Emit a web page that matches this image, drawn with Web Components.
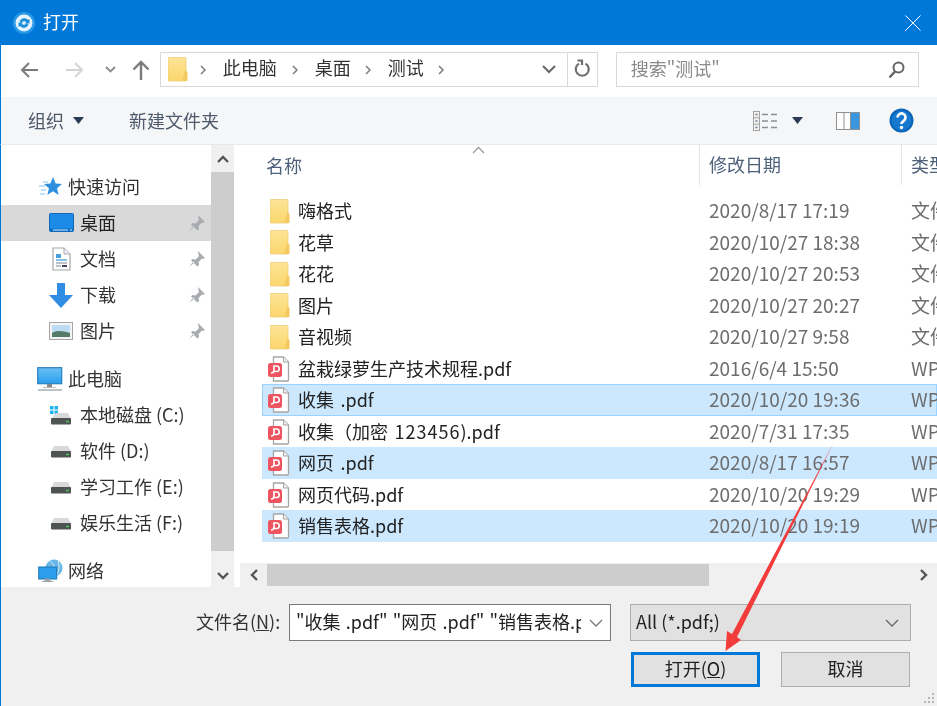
<!DOCTYPE html>
<html lang="zh-CN">
<head>
<meta charset="UTF-8">
<title>打开</title>
<style>
  html, body { margin: 0; height: 100%; overflow: hidden; }
  body { font: 18px "Noto Sans CJK SC", "Noto Sans", sans-serif; color: #222; }
</style>
</head>
<body>
<file-dialog>
  <title-bar slot="title">打开</title-bar>
  <nav-bar slot="nav"></nav-bar>
  <tool-bar slot="tools"></tool-bar>
  <side-panel slot="side">
    <tree-item icon="star" top>快速访问</tree-item>
    <tree-item icon="desktop" sub pinned selected>桌面</tree-item>
    <tree-item icon="doc" sub pinned>文档</tree-item>
    <tree-item icon="download" sub pinned>下载</tree-item>
    <tree-item icon="pics" sub pinned>图片</tree-item>
    <tree-item icon="pc" top gap>此电脑</tree-item>
    <tree-item icon="cdrive" sub>本地磁盘 (C:)</tree-item>
    <tree-item icon="drive" sub>软件 (D:)</tree-item>
    <tree-item icon="drive" sub>学习工作 (E:)</tree-item>
    <tree-item icon="drive" sub>娱乐生活 (F:)</tree-item>
    <tree-item icon="network" top gap>网络</tree-item>
  </side-panel>
  <file-list slot="files">
    <file-row icon="folder" date="2020/8/17 17:19" type="文件夹">嗨格式</file-row>
    <file-row icon="folder" date="2020/10/27 18:38" type="文件夹">花草</file-row>
    <file-row icon="folder" date="2020/10/27 20:53" type="文件夹">花花</file-row>
    <file-row icon="folder" date="2020/10/27 20:27" type="文件夹">图片</file-row>
    <file-row icon="folder" date="2020/10/27 9:58" type="文件夹">音视频</file-row>
    <file-row icon="pdf" date="2016/6/4 15:50" type="WPS PDF 文档">盆栽绿萝生产技术规程.pdf</file-row>
    <file-row icon="pdf" date="2020/10/20 19:36" type="WPS PDF 文档" selected focused>收集 .pdf</file-row>
    <file-row icon="pdf" date="2020/7/31 17:35" type="WPS PDF 文档">收集（加密 <span style="letter-spacing:1px">123456</span>).pdf</file-row>
    <file-row icon="pdf" date="2020/8/17 16:57" type="WPS PDF 文档" selected>网页 .pdf</file-row>
    <file-row icon="pdf" date="2020/10/20 19:29" type="WPS PDF 文档">网页代码.pdf</file-row>
    <file-row icon="pdf" date="2020/10/20 19:19" type="WPS PDF 文档" selected>销售表格.pdf</file-row>
  </file-list>
  <dialog-footer slot="footer"></dialog-footer>
  <red-arrow slot="arrow"></red-arrow>
</file-dialog>

<script>
const chevron = (points, color, w) => `<polyline points="${points}" fill="none" stroke="${color}" stroke-width="${w}"/>`;

const ICONS = {
  folder: [20, 25, `<defs><linearGradient id="f" x1="0" x2="0" y1="0" y2="1"><stop offset="0" stop-color="#fde597"/><stop offset="1" stop-color="#fbd66d"/></linearGradient></defs>
    <path d="M1.500 .5h15.500a1 1 0 0 1 1 1v22.500h-17a1 1 0 0 1-1-1v-21.500a1 1 0 0 1 1.500-1z" fill="url(#f)" stroke="#eccd78" stroke-width=".8"/>
    <path d="M17.500 12.500l2 3v8.500h-5.500z" fill="#f4c95f"/>`],
  pdf: [23, 26, `<path d="M6.500 1h10l5 5v18a1 1 0 0 1-1 1h-14z" fill="#fff" stroke="#a5a5a5" stroke-width="1.300"/>
    <path d="M16.500 1v5h5" fill="#eee" stroke="#a5a5a5"/>
    <rect x="1" y="7" width="14" height="14" rx="2.500" fill="#ef5561"/>
    <path d="M6 10h3.500a2.500 2.500 0 0 1 0 5.500h-2.500M7 10v4c0 2-1 3-3 3" fill="none" stroke="#fff" stroke-width="1.600"/>`],
  star: [24, 24, `<path d="M15 2l2.600 6.600 6.400.4-5 4.300 1.700 6.700-5.700-3.700-5.700 3.700 1.700-6.700-5-4.300 6.400-.4z" fill="#2e8fe0"/><path d="M1 11h6M3 15h5M2 19h5M5 7h5" stroke="#7cc4f2" stroke-width="1.200"/>`],
  desktop: [25, 20, `<rect x=".5" y=".5" width="24" height="18" rx="1" fill="#1c8be8" stroke="#1166b8"/><path d="M1 15.500h23v3H1z" fill="#0f6fc6"/><path d="M4 17h15M21 17h2" stroke="#cfe8fb"/>`],
  doc: [19, 24, `<path d="M1 1h11l6 6v16H1z" fill="#fff" stroke="#a7a7a7" stroke-width="1.200"/><path d="M12 1v6h6" fill="#eef" stroke="#a7a7a7"/><path d="M4 7h5v4H4z" fill="#4aa0dc"/><path d="M4 13h11" stroke="#4aa0dc" stroke-width="1.300"/><path d="M4 16h11M4 19h5" stroke="#7a8a96" stroke-width="1.200"/><path d="M10 18h5v2h-5z" fill="#446"/>`],
  download: [24, 25, `<path d="M8 0h8v12h8L12 25 0 12h8z" fill="#2f8de4"/>`],
  pics: [24, 18, `<rect x=".5" y=".5" width="23" height="17" fill="#f4f4f4" stroke="#a4a4a4"/><rect x="3" y="3" width="18" height="12" fill="#bcdcf3"/><path d="M3 11c5-3 11-2 18 0v4H3z" fill="#567a68"/>`],
  pc: [26, 25, `<defs><linearGradient id="m" x1="0" x2="0" y1="0" y2="1"><stop offset="0" stop-color="#6cc0f5"/><stop offset="1" stop-color="#28a0ec"/></linearGradient></defs><rect x=".7" y=".7" width="24" height="16" fill="url(#m)" stroke="#2a7fc0" stroke-width="1.200"/><path d="M10 17h5v3h-5z" fill="#888"/><path d="M1 23h24" stroke="#aab4ba" stroke-width="1.600"/><path d="M6 20.500h13" stroke="#bbb"/>`],
  drive: [22, 13, `<path d="M4 1h14l3 6H1z" fill="#d9d9d9"/><rect x="1" y="6" width="20" height="6.500" rx="1" fill="#4e5353"/><path d="M16 9.500h3" stroke="#4ecb57" stroke-width="1.500"/>`],
  cdrive: [22, 20, `<path d="M0 1h3.500v3.500H0zM4.500 1H8v3.500H4.500zM0 5.500h3.500V9H0zM4.500 5.500H8V9H4.500z" fill="#1cb5ef"/><path d="M6 8h12l3 6H2l2-4z" fill="#d9d9d9"/><rect x="1" y="13" width="20" height="6.500" rx="1" fill="#4e5353"/><path d="M16 16.500h3" stroke="#4ecb57" stroke-width="1.500"/>`],
  network: [25, 24, `<circle cx="16" cy="9" r="8.500" fill="#68b7e6"/><path d="M12 2c4 3 6 8 4 15M20 2c2 5 1 11-2 15" stroke="#d9eefa" fill="none"/><rect x=".7" y="8" width="18" height="12" fill="#2a9eea" stroke="#1d76b6"/><path d="M7 20h5v2H7zM4 22.500h11" stroke="#9aa4aa" fill="#9aa4aa"/>`],
  pin: [18, 18, `<path d="M10 1l7 7-2 1-1-.5-3.500 3.500.5 3-1.500 1.500L3 10.500 4.500 9l3 .5L11 6l-.5-1.500zM5.500 11.500L1 17l5.500-4.500z" fill="#a8acb0"/>`]
};

class WinIcon extends HTMLElement {
  connectedCallback() {
    const [w, h, body] = ICONS[this.getAttribute('name')];
    this.attachShadow({ mode: 'open' }).innerHTML = `
      <style>:host { display: inline-flex; } svg { display: block; }</style>
      <svg width="${w}" height="${h}" viewBox="0 0 ${w} ${h}">${body}</svg>`;
  }
}

class FileDialog extends HTMLElement {
  constructor() {
    super();
    this.attachShadow({ mode: 'open' }).innerHTML = `
      <style>
        :host { display: flex; flex-direction: column; position: relative; width: 937px; height: 706px; overflow: hidden; background: #fff; filter: blur(.35px); }
        .middle { display: flex; height: 442px; overflow: hidden; border-left: 1px solid #0078d7; }
      </style>
      <slot name="title"></slot>
      <slot name="nav"></slot>
      <slot name="tools"></slot>
      <div class="middle"><slot name="side"></slot><slot name="files"></slot></div>
      <slot name="footer"></slot>
      <slot name="arrow"></slot>`;
  }
}

class TitleBar extends HTMLElement {
  constructor() {
    super();
    this.attachShadow({ mode: 'open' }).innerHTML = `
      <style>
        :host { display: flex; align-items: center; height: 45px; flex: none; background: #0078d7; color: #fff; padding: 0 16px 0 13px; }
        .text { margin-left: 8px; flex: 1; padding-bottom: 4px; }
      </style>
      <svg width="22" height="22" viewBox="0 0 22 22">
        <circle cx="11" cy="11" r="11" fill="#2a9ae8"/><circle cx="11" cy="11" r="8.500" fill="#e6f5fd"/>
        <path d="M6.500 9.500a5 5 0 0 1 8.500-1.500l1.500-1v4.500h-4.500l1.300-1.300a2.800 2.800 0 0 0-4.500.3zM15.500 12.500a5 5 0 0 1-8.500 1.500l-1.500 1v-4.500h4.500l-1.300 1.300a2.800 2.800 0 0 0 4.500-.3z" fill="#1c8ed9"/>
      </svg>
      <span class="text"><slot></slot></span>
      <svg width="16" height="16" viewBox="0 0 16 16"><path d="M.5 .5l15 15M15.500 .5l-15 15" stroke="#fff" stroke-width="1"/></svg>`;
  }
}

class NavBar extends HTMLElement {
  constructor() {
    super();
    this.attachShadow({ mode: 'open' }).innerHTML = `
      <style>
        :host { display: flex; align-items: center; height: 52px; flex: none; box-sizing: border-box; padding: 0 18px 3px 1px; background: #fff; border-left: 1px solid #0078d7; }
        .btns { display: flex; align-items: center; width: 158px; box-sizing: border-box; padding-left: 18px; }
        .btns svg { display: block; flex: none; }
        .addr, .search { display: flex; align-items: center; height: 35px; box-sizing: border-box; border: 1px solid #d9d9d9; }
        .addr { width: 439px; padding-left: 7px; color: #333; }
        .crumb { display: flex; align-items: center; }
        .crumb span { margin: 0 14px 0 17px; padding-bottom: 6px; }
        .end { margin-left: auto; display: flex; align-items: center; height: 100%; }
        .refresh { display: flex; align-items: center; justify-content: center; width: 30px; height: 100%; border-left: 1px solid #d9d9d9; padding-bottom: 2px; box-sizing: border-box; }
        .search { width: 304px; margin-left: 18px; padding: 0 13px 0 14px; justify-content: space-between; color: #8a8a8a; }
        .search span { padding-bottom: 3px; }
      </style>
      <div class="btns">
        <svg width="19" height="16" viewBox="0 0 19 16"><path d="M18 8H3M9 1L2 8l7 7" fill="none" stroke="#7b7b7b" stroke-width="2"/></svg>
        <svg style="margin-left:26px" width="19" height="16" viewBox="0 0 19 16"><path d="M1 8h15M10 1l7 7-7 7" fill="none" stroke="#d4d4d4" stroke-width="2"/></svg>
        <svg style="margin-left:21px" width="11" height="7" viewBox="0 0 11 7">${chevron('1,1 5.500,5.500 10,1', '#8b8b8b', 1.800)}</svg>
        <svg style="margin-left:16px" width="18" height="20" viewBox="0 0 18 20"><path d="M9 20V3M1.500 9.500L9 2l7.500 7.500" fill="none" stroke="#7b7b7b" stroke-width="2.400"/></svg>
      </div>
      <div class="addr">
        <win-icon name="folder"></win-icon>
        <div class="crumb" style="margin-left:12px">
          <svg width="6" height="10" viewBox="0 0 6 10">${chevron('1,1 5,5 1,9', '#7a7a7a', 1.500)}</svg><span style="margin-right:15px">此电脑</span>
          <svg width="6" height="10" viewBox="0 0 6 10">${chevron('1,1 5,5 1,9', '#7a7a7a', 1.500)}</svg><span>桌面</span>
          <svg width="6" height="10" viewBox="0 0 6 10">${chevron('1,1 5,5 1,9', '#7a7a7a', 1.500)}</svg><span>测试</span>
          <svg width="6" height="10" viewBox="0 0 6 10">${chevron('1,1 5,5 1,9', '#7a7a7a', 1.500)}</svg>
        </div>
        <div class="end">
          <svg style="margin-right:11px" width="14" height="9" viewBox="0 0 14 9">${chevron('1,1 7,7 13,1', '#666', 2)}</svg>
          <div class="refresh"><svg width="17" height="19" viewBox="0 0 17 19"><path d="M11.500 4.600a6.500 6.500 0 1 1-6.500 0M3.500 1.500h4.500v4.500" fill="none" stroke="#6f6f6f" stroke-width="2.200"/></svg></div>
        </div>
      </div>
      <div class="search">
        <span>搜索"测试"</span>
        <svg width="17" height="18" viewBox="0 0 17 18"><circle cx="10.500" cy="6.500" r="5" fill="none" stroke="#666" stroke-width="2"/><path d="M7 10.500L1.500 16.500" stroke="#666" stroke-width="2.500"/></svg>
      </div>`;
  }
}

class ToolBar extends HTMLElement {
  constructor() {
    super();
    this.attachShadow({ mode: 'open' }).innerHTML = `
      <style>
        :host { display: flex; align-items: center; height: 48px; flex: none; box-sizing: border-box; background: #f5f6f7; border-left: 1px solid #0078d7; border-bottom: 1px solid #e7e9ec; padding: 0 23px 0 27px; color: #4d5a6b; }
        svg { display: block; flex: none; }
        span { padding-bottom: 2px; }
        .spacer { flex: 1; }
      </style>
      <span>组织</span>
      <svg style="margin-left:9px" width="11" height="7" viewBox="0 0 11 7"><path d="M0 0h11L5.500 7z" fill="#2b3a55"/></svg>
      <span style="margin-left:45px">新建文件夹</span>
      <div class="spacer"></div>
      <svg width="24" height="20" viewBox="0 0 24 20" fill="none">
        <rect x=".5" y=".5" width="6" height="19" fill="#f2f2f2" stroke="#a2a2a2"/><path d="M.5 6.800h6M.5 13.200h6" stroke="#a2a2a2"/>
        <path d="M2.500 3.500h2M2.500 10h2M2.500 16.500h2" stroke="#6b7c8f" stroke-width="1.500"/>
        <path d="M9 3.500h6M18 3.500h6M9 10h6M18 10h6M9 16.500h6M18 16.500h6" stroke="#8a8f95" stroke-width="1.300"/>
      </svg>
      <svg style="margin-left:15px" width="11" height="7" viewBox="0 0 11 7"><path d="M0 0h11L5.500 7z" fill="#2b3a55"/></svg>
      <svg style="margin-left:33px" width="24" height="18" viewBox="0 0 24 18"><rect x=".5" y=".5" width="23" height="17" fill="#fff" stroke="#8f8f8f"/><path d="M8 1v16" stroke="#8f8f8f"/><rect x="15" y="1" width="8" height="16" fill="#3b96e0"/><path d="M14.500 1v16" stroke="#8f8f8f"/></svg>
      <svg style="margin-left:29px" width="25" height="25" viewBox="0 0 25 25"><circle cx="12.500" cy="12.500" r="12" fill="#0a64b8"/><circle cx="12.500" cy="12.500" r="10" fill="#1678ce"/><path d="M8.500 9.500a4 4 0 1 1 6.200 3.300c-1.500 1-2.200 1.600-2.200 3.200" fill="none" stroke="#fff" stroke-width="2.600"/><circle cx="12.500" cy="19.500" r="1.700" fill="#fff"/></svg>`;
  }
}

class SidePanel extends HTMLElement {
  constructor() {
    super();
    this.attachShadow({ mode: 'open' }).innerHTML = `
      <style>
        :host { display: flex; width: 239px; flex: none; height: 100%; }
        .tree { width: 210px; padding-top: 24px; box-sizing: border-box; overflow: hidden; }
        .bar { width: 23px; display: flex; flex-direction: column; background: #f0f0f0; }
        .arrow { display: flex; align-items: center; justify-content: center; }
        .thumb { height: 379px; background: #cdcdcd; }
      </style>
      <div class="tree"><slot></slot></div>
      <div class="bar">
        <div class="arrow" style="height:27px"><svg width="12" height="8" viewBox="0 0 12 8">${chevron('1,7 6,2 11,7', '#555', 2.400)}</svg></div>
        <div class="thumb"></div>
        <div class="arrow" style="height:36px;padding-top:13px;box-sizing:border-box"><svg width="12" height="8" viewBox="0 0 12 8">${chevron('1,1 6,6 11,1', '#555', 2.400)}</svg></div>
      </div>`;
  }
}

class TreeItem extends HTMLElement {
  connectedCallback() {
    const sub = this.hasAttribute('sub');
    this.attachShadow({ mode: 'open' }).innerHTML = `
      <style>
        :host { display: flex; align-items: center; height: 36px; position: relative; color: #333; white-space: nowrap; }
        :host([selected]) { background: #d9d9d9; color: #222; }
        :host([gap]) { margin-top: 12px; }
        .ico { width: 30px; margin-left: ${sub ? 45 : 34}px; margin-right: ${sub ? 4 : 3}px; display: flex; justify-content: center; }
        .txt { padding-bottom: 2px; }
        .pin { margin-left: auto; margin-right: 5px; display: flex; }
      </style>
      <span class="ico"><win-icon name="${this.getAttribute('icon')}"></win-icon></span>
      <span class="txt"><slot></slot></span>
      ${this.hasAttribute('pinned') ? '<span class="pin"><win-icon name="pin"></win-icon></span>' : ''}`;
  }
}

class FileList extends HTMLElement {
  constructor() {
    super();
    this.attachShadow({ mode: 'open' }).innerHTML = `
      <style>
        :host { display: flex; flex-direction: column; flex: 1; min-width: 0; height: 100%; position: relative; }
        .head { display: grid; grid-template-columns: 437px 202px 1fr; height: 42px; margin-left: 22px; flex: none; color: #4c607a; white-space: nowrap; overflow: hidden; }
        .head div { display: flex; align-items: center; padding: 0 0 3px 4px; box-sizing: border-box; }
        .head div + div { border-left: 1px solid #e5e5e5; padding-left: 9px; height: 40px; }
        .caret { position: absolute; left: 232px; top: 1px; }
        .rows { flex: 1; margin: 8.250px 0 0 22px; overflow: hidden; min-height: 0; }
        .hbar { display: flex; align-items: center; height: 24px; flex: none; background: #f0f0f0; }
        .hbar .end { width: 27px; display: flex; justify-content: center; flex: none; }
        .hthumb { width: 442px; height: 22px; background: #cdcdcd; }
      </style>
      <div class="head"><div>名称</div><div>修改日期</div><div>类型</div></div>
      <svg class="caret" width="13" height="8" viewBox="0 0 13 8">${chevron('1,7 6.500,1.500 12,7', '#9a9a9a', 1.300)}</svg>
      <div class="rows"><slot></slot></div>
      <div class="hbar">
        <div class="end"><svg width="8" height="12" viewBox="0 0 8 12">${chevron('7,1 2,6 7,11', '#555', 2.400)}</svg></div>
        <div class="hthumb"></div>
        <div style="flex:1"></div>
        <div class="end"><svg width="8" height="12" viewBox="0 0 8 12">${chevron('1,1 6,6 1,11', '#555', 2.400)}</svg></div>
      </div>`;
  }
}

class FileRow extends HTMLElement {
  connectedCallback() {
    const pdf = this.getAttribute('icon') === 'pdf';
    this.attachShadow({ mode: 'open' }).innerHTML = `
      <style>
        :host { display: grid; grid-template-columns: 447px 202px 1fr; align-items: center; height: 31.500px; box-sizing: border-box; white-space: nowrap; overflow: hidden; }
        :host([selected]) { background: #cce8ff; }
        :host([focused]) { box-shadow: inset 0 0 0 1px #99d1ff; }
        .name { display: flex; align-items: center; color: #222; word-spacing: 2.500px; }
        .ico { width: 23px; margin: 0 ${pdf ? 8 : 5}px 0 ${pdf ? 5 : 8}px; display: flex; }
        .txt { padding-bottom: 2px; }
        .dim { color: #6d6d6d; font-size: 19px; line-height: 26px; padding-bottom: 2px; }
      </style>
      <div class="name"><span class="ico"><win-icon name="${this.getAttribute('icon')}"></win-icon></span><span class="txt"><slot></slot></span></div>
      <div class="dim">${this.getAttribute('date')}</div>
      <div class="dim">${this.getAttribute('type')}</div>`;
  }
}

class DialogFooter extends HTMLElement {
  constructor() {
    super();
    this.attachShadow({ mode: 'open' }).innerHTML = `
      <style>
        :host { display: block; flex: 1; position: relative; box-sizing: border-box; background: #f0f0f0; border-left: 1px solid #0078d7; padding: 17px 26px 0 195px; }
        .line { display: flex; align-items: center; height: 37px; }
        .label { width: 93px; flex: none; color: #333; white-space: nowrap; padding-bottom: 4px; }
        .input, .combo { display: flex; align-items: center; height: 37px; box-sizing: border-box; white-space: nowrap; }
        .input { width: 322px; flex: none; background: #fff; border: 1px solid #7a7a7a; padding: 0 11px 0 6px; color: #222; word-spacing: 1.200px; }
        .input span { width: 285px; overflow: hidden; flex: none; margin-right: 8px; padding-bottom: 4px; }
        .combo { width: 281px; margin-left: 19px; flex: none; background: #e1e1e1; border: 1px solid #adadad; padding: 0 11px 0 5px; color: #222; justify-content: space-between; }
        .combo span { padding-bottom: 4px; }
        .btns { display: flex; margin: 11px 0 0 435px; }
        .btn { display: flex; align-items: center; justify-content: center; width: 129px; height: 35px; box-sizing: border-box; background: #e1e1e1; border: 1px solid #adadad; color: #222; }
        .btn span { padding-bottom: 4px; }
        .btn.main { border: 3px solid #0078d7; margin-right: 21px; }
        .grip { position: absolute; right: 2px; bottom: 2px; }
        svg { display: block; flex: none; }
      </style>
      <div class="line">
        <div class="label">文件名(<u>N</u>):</div>
        <div class="input"><span>"收集 .pdf" "网页 .pdf" "销售表格.pdf"</span>
          <svg width="14" height="8" viewBox="0 0 14 8">${chevron('1,1 7,7 13,1', '#777', 1.300)}</svg></div>
        <div class="combo"><span>All (*.pdf;)</span>
          <svg width="14" height="8" viewBox="0 0 14 8">${chevron('1,1 7,7 13,1', '#666', 1.300)}</svg></div>
      </div>
      <div class="btns">
        <div class="btn main"><span>打开(<u>O</u>)</span></div>
        <div class="btn"><span>取消</span></div>
      </div>
      <svg class="grip" width="12" height="12" viewBox="0 0 12 12" fill="#b5b5b5"><rect x="9" y="1" width="2" height="2"/><rect x="5" y="5" width="2" height="2"/><rect x="9" y="5" width="2" height="2"/><rect x="1" y="9" width="2" height="2"/><rect x="5" y="9" width="2" height="2"/><rect x="9" y="9" width="2" height="2"/></svg>`;
  }
}

class RedArrow extends HTMLElement {
  constructor() {
    super();
    this.attachShadow({ mode: 'open' }).innerHTML = `
      <style>:host { position: absolute; left: 0; top: 0; pointer-events: none; } svg { display: block; }</style>
      <svg width="937" height="706" viewBox="0 0 937 706"><polygon points="833.500,443 737,637 741,640 725.500,651 727,631 732,634" fill="#f23c3c"/></svg>`;
  }
}

customElements.define('win-icon', WinIcon);
customElements.define('title-bar', TitleBar);
customElements.define('nav-bar', NavBar);
customElements.define('tool-bar', ToolBar);
customElements.define('side-panel', SidePanel);
customElements.define('tree-item', TreeItem);
customElements.define('file-list', FileList);
customElements.define('file-row', FileRow);
customElements.define('dialog-footer', DialogFooter);
customElements.define('red-arrow', RedArrow);
customElements.define('file-dialog', FileDialog);
</script>
</body>
</html>
